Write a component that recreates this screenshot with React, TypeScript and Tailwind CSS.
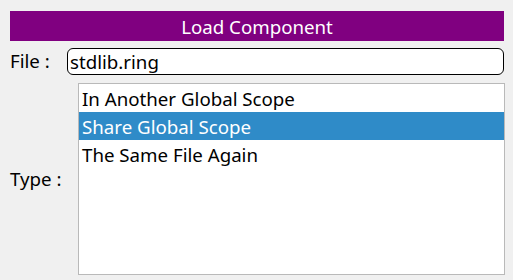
import { useState } from 'react';

const types = ['In Another Global Scope', 'Share Global Scope', 'The Same File Again'];

export default function App() {
  const [file, setFile] = useState('stdlib.ring');
  const [selected, setSelected] = useState(1);

  return (
    <div className="w-[513px] h-[280px] bg-[#f0f0f0] pt-[11px] pl-[10px] pr-[9px] text-[18.7px] text-black" style={{ fontFamily: '"Noto Sans", "Open Sans", sans-serif' }}>
      {/* タイトル */}
      <div className="h-[30px] bg-[#800080] text-white flex items-center justify-center leading-none pt-[2px]">
        Load Component
      </div>

      {/* ファイル */}
      <div className="flex items-center mt-[7px] h-[27px]">
        <span className="w-[57px] shrink-0 leading-none">File :</span>
        <input
          value={file}
          onChange={(e) => setFile(e.target.value)}
          className="flex-1 h-[27px] border border-black rounded-[6px] bg-white px-[2px] outline-none leading-none"
        />
      </div>

      {/* 種類 */}
      <div className="flex items-center mt-[8px]">
        <span className="w-[68px] shrink-0 leading-none">Type :</span>
        <div className="flex-1 mr-[-1px] h-[192px] bg-white border border-[#b9b9b9] flex flex-col">
          {types.map((t, i) => (
            <button
              key={t}
              onClick={() => setSelected(i)}
              className={`h-[28px] text-left px-[3px] pt-[2px] leading-none ${i === selected ? 'bg-[#2f8bc8] text-white' : ''}`}
            >
              {t}
            </button>
          ))}
        </div>
      </div>
    </div>
  );
}
